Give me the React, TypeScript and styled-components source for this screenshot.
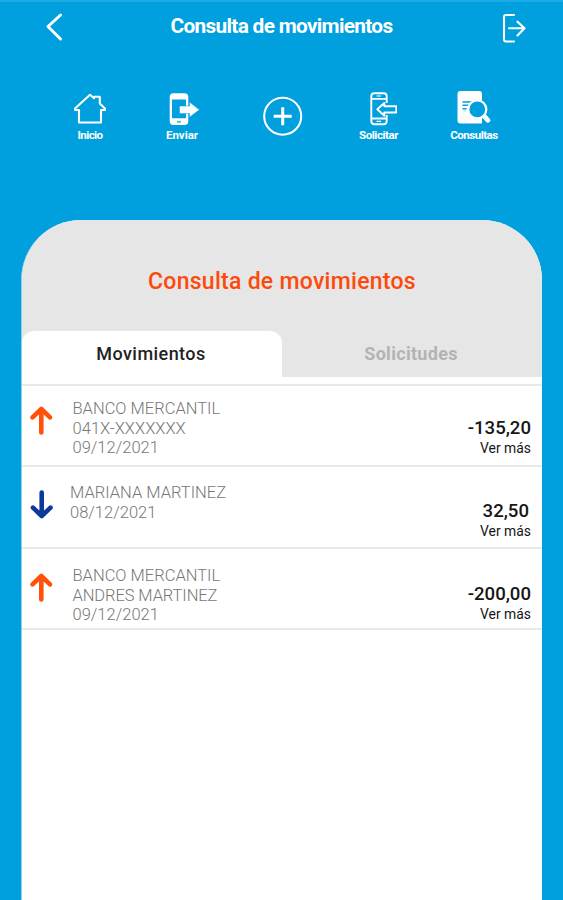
import React from "react";
import styled, { createGlobalStyle } from "styled-components";

const GlobalStyle = createGlobalStyle`
  * { box-sizing: border-box; }
  body { margin: 0; background: #009fde; font-family: Roboto, "Liberation Sans", sans-serif; }
  h1, h2, p { margin: 0; }
  button { border: 0; padding: 0; background: none; font: inherit; color: inherit; }
  svg { display: block; }
`;

const Screen = styled.div`
  display: flex;
  flex-direction: column;
  height: 900px;
  overflow: hidden;
  background: #009fde;
  border-top: 2px solid #1cace6;
`;

const Header = styled.header`
  display: grid;
  grid-template-columns: 107px 1fr 107px;
  align-items: start;
  height: 88px;
  color: #fff;
`;

const HeaderButton = styled.button<{ $left: number; $top: number }>`
  justify-self: start;
  margin-left: ${(p) => p.$left}px;
  margin-top: ${(p) => p.$top}px;
`;

const HeaderTitle = styled.h1`
  padding-top: 12px;
  text-align: center;
  white-space: nowrap;
  font-size: 20.8px;
  line-height: 25px;
  font-weight: 700;
  letter-spacing: -0.68px;
`;

const Nav = styled.nav`
  display: grid;
  grid-template-columns: 92px 92px 110px 81px 110px;
  height: 130px;
  margin-left: 44px;
`;

const NavItem = styled.button`
  display: flex;
  flex-direction: column;
  align-items: center;
  color: #fff;
`;

const NavLabel = styled.span<{ $spacing: number }>`
  margin-top: 1px;
  font-size: 11.5px;
  line-height: 13px;
  font-weight: 700;
  letter-spacing: ${(p) => p.$spacing}px;
`;

const Card = styled.main`
  flex: 1;
  margin: 0 21px;
  border-left: 1px solid #8fcfee;
  border-radius: 60px 60px 0 0;
  background: #fff;
  overflow: hidden;
`;

const CardHead = styled.div`
  background: #e6e6e6;
`;

const CardTitle = styled.h2`
  height: 111px;
  padding-top: 47px;
  text-align: center;
  font-size: 23px;
  line-height: 30px;
  font-weight: 500;
  letter-spacing: 0.27px;
  color: #fd4a0c;
`;

const Tabs = styled.div`
  display: grid;
  grid-template-columns: 1fr 1fr;
  height: 46px;
`;

const Tab = styled.button<{ $active?: boolean }>`
  padding: 0 2px 2px 0;
  border-radius: 12px 12px 0 0;
  background: ${(p) => (p.$active ? "#fff" : "transparent")};
  color: ${(p) => (p.$active ? "#222" : "#b3b3b3")};
  font-size: 18px;
  font-weight: ${(p) => (p.$active ? 500 : 700)};
  letter-spacing: ${(p) => (p.$active ? 0.45 : 0.3)}px;
`;

const List = styled.div`
  margin-top: 7px;
  border-top: 2px solid #e9e9e9;
`;

const Row = styled.div<{ $height: number; $top: number }>`
  display: flex;
  height: ${(p) => p.$height}px;
  padding: ${(p) => p.$top}px 11px 0 0;
  border-bottom: 2px solid #e9e9e9;
`;

const ArrowCell = styled.div<{ $top: number; $down?: boolean }>`
  width: 40px;
  margin-top: ${(p) => p.$top}px;
  padding-left: 7px;
  svg { transform: ${(p) => (p.$down ? "rotate(180deg)" : "none")}; }
`;

const Details = styled.div<{ $indent: number }>`
  flex: 1;
  padding-left: ${(p) => p.$indent}px;
  font-size: 16.5px;
  line-height: 19.7px;
  font-weight: 300;
  color: #777;
`;

const Line = styled.p<{ $spacing?: number }>`
  letter-spacing: ${(p) => p.$spacing ?? 0}px;
`;

const AmountCell = styled.div<{ $top: number }>`
  padding-top: ${(p) => p.$top}px;
  text-align: right;
  color: #161616;
`;

const Amount = styled.p<{ $right?: number }>`
  padding-right: ${(p) => p.$right ?? 0}px;
  font-size: 18.6px;
  line-height: 22px;
  font-weight: 500;
`;

const More = styled.p`
  font-size: 13.9px;
  line-height: 19px;
`;

const BackIcon = () => (
  <svg width="18" height="30" viewBox="0 0 18 30" fill="none" stroke="#fff" strokeWidth="3" strokeLinecap="round" strokeLinejoin="round">
    <path d="M15.5 3 3 14.5 15.5 27" />
  </svg>
);

const ExitIcon = () => (
  <svg width="25" height="31" viewBox="0 0 25 31" fill="none" stroke="#fff" strokeWidth="2.1" strokeLinecap="round" strokeLinejoin="round">
    <path d="M12 2H4Q2 2 2 4V26Q2 28.5 4 28.5H12M7 15.3H22.5M15.5 8.7 22.5 15.3 15.5 22.5" />
  </svg>
);

const HomeIcon = () => (
  <svg width="34" height="38" viewBox="0 0 34 38" fill="none" stroke="#fff" strokeWidth="2.1" strokeLinejoin="round">
    <path d="M2 18.5 17 4.8 21 8.2V6.8H26.8V13.5L32 18.5V20H28V32.5H6V20H2Z" />
  </svg>
);

const SendIcon = () => (
  <svg width="36" height="38" viewBox="0 0 36 38">
    <path fill="#fff" fillRule="evenodd" d="M9.5 3.2H20.5Q24.3 3.2 24.3 7V31Q24.3 35 20.5 35H9.5Q5.7 35 5.7 31V7Q5.7 3.2 9.5 3.2ZM8 9.5V28.3H22V9.5ZM13 31.2V32.4H17V31.2Z" />
    <path d="M15.5 16H25.5V12L35.4 19.7 25.5 27.2V23.6H15.5Z" fill="#fff" stroke="#009fde" strokeWidth=".5" />
  </svg>
);

const PlusIcon = () => (
  <svg width="42" height="48" viewBox="0 0 42 48" fill="none" stroke="#fff">
    <circle cx="20.7" cy="26.2" r="18.5" strokeWidth="2.1" />
    <path d="M20.7 17.2V35.2M11.7 26.2H29.7" strokeWidth="3" />
  </svg>
);

const RequestIcon = () => (
  <svg width="36" height="38" viewBox="0 0 36 38" fill="none" stroke="#fff" strokeWidth="1.9" strokeLinejoin="round">
    <path d="M25.7 13V6.3Q25.7 3.2 22.7 3.2H13.3Q10.3 3.2 10.3 6.3V31Q10.3 34.2 13.3 34.2H22.7Q25.7 34.2 25.7 31V25M10.3 8.9H25.7M10.3 28.5H25.7" />
    <path strokeWidth="1.2" d="M15.5 31.4H20M15.5 6H20" />
    <path d="M17 19.3 24 13V16.3H36V22.5H24V25.7Z" transform="translate(-.7 0)" />
  </svg>
);

const SearchDocIcon = () => (
  <svg width="38" height="38" viewBox="0 0 38 38">
    <path fill="#fff" d="M5.5 1H24Q27 1 27 4V33.5H5.5Q2.5 33.5 2.5 30.5V4Q2.5 1 5.5 1Z" />
    <path stroke="#009fde" strokeWidth="1.5" d="M7.5 12H17M7.5 15.2H14.5M7.5 18.8H11.5" />
    <path stroke="#009fde" strokeOpacity=".4" d="M8.5 21H11" />
    <path d="M28.5 25.5 33 30.3" stroke="#fff" strokeWidth="4.8" strokeLinecap="round" />
    <circle cx="22.3" cy="19.4" r="9" fill="#009fde" stroke="#fff" strokeWidth="2.2" />
  </svg>
);

const Arrow = ({ color }: { color: string }) => (
  <svg width="25" height="32" viewBox="0 0 25 32" fill="none" stroke={color} strokeWidth="4.6" strokeLinecap="round" strokeLinejoin="round">
    <path d="M12.3 27.5V4M3.5 12.3 12.3 4 21 12.3" />
  </svg>
);

const navItems = [
  { label: "Inicio", spacing: -0.6, Icon: HomeIcon },
  { label: "Enviar", spacing: 0, Icon: SendIcon },
  { label: "", spacing: 0, Icon: PlusIcon },
  { label: "Solicitar", spacing: -0.45, Icon: RequestIcon },
  { label: "Consultas", spacing: -0.5, Icon: SearchDocIcon },
];

interface Movement {
  lines: { text: string; spacing?: number }[];
  amount: string;
  down?: boolean;
  height: number;
  top: number;
  arrowTop: number;
  amountTop: number;
  indent: number;
  amountRight?: number;
}

const movements: Movement[] = [
  {
    lines: [{ text: "BANCO MERCANTIL" }, { text: "041X-XXXXXXX", spacing: 0.05 }, { text: "09/12/2021" }],
    amount: "-135,20", height: 81, top: 13, arrowTop: 6, amountTop: 18, indent: 10.5,
  },
  {
    lines: [{ text: "MARIANA MARTINEZ" }, { text: "08/12/2021" }],
    amount: "32,50", down: true, height: 82, top: 16, arrowTop: 5, amountTop: 17, indent: 8, amountRight: 2,
  },
  {
    lines: [{ text: "BANCO MERCANTIL" }, { text: "ANDRES MARTINEZ", spacing: -0.1 }, { text: "09/12/2021" }],
    amount: "-200,00", height: 81, top: 17, arrowTop: 6, amountTop: 17, indent: 10.5,
  },
];

export default function App() {
  return (
    <>
      <GlobalStyle />
      <Screen>
        <Header>
          <HeaderButton aria-label="Volver" $left={45} $top={10}><BackIcon /></HeaderButton>
          <HeaderTitle>Consulta de movimientos</HeaderTitle>
          <HeaderButton aria-label="Salir" $left={46} $top={11}><ExitIcon /></HeaderButton>
        </Header>
        <Nav>
          {navItems.map(({ label, spacing, Icon }, i) => (
            <NavItem key={i} aria-label={label || "Agregar"}>
              <Icon />
              {label && <NavLabel $spacing={spacing}>{label}</NavLabel>}
            </NavItem>
          ))}
        </Nav>
        <Card>
          <CardHead>
            <CardTitle>Consulta de movimientos</CardTitle>
            <Tabs>
              <Tab $active>Movimientos</Tab>
              <Tab>Solicitudes</Tab>
            </Tabs>
          </CardHead>
          <List>
            {movements.map((m, i) => (
              <Row key={i} $height={m.height} $top={m.top}>
                <ArrowCell $top={m.arrowTop} $down={m.down}>
                  <Arrow color={m.down ? "#0b3a9c" : "#ff5208"} />
                </ArrowCell>
                <Details $indent={m.indent}>
                  {m.lines.map((l) => <Line key={l.text} $spacing={l.spacing}>{l.text}</Line>)}
                </Details>
                <AmountCell $top={m.amountTop}>
                  <Amount $right={m.amountRight}>{m.amount}</Amount>
                  <More>Ver más</More>
                </AmountCell>
              </Row>
            ))}
          </List>
        </Card>
      </Screen>
    </>
  );
}
